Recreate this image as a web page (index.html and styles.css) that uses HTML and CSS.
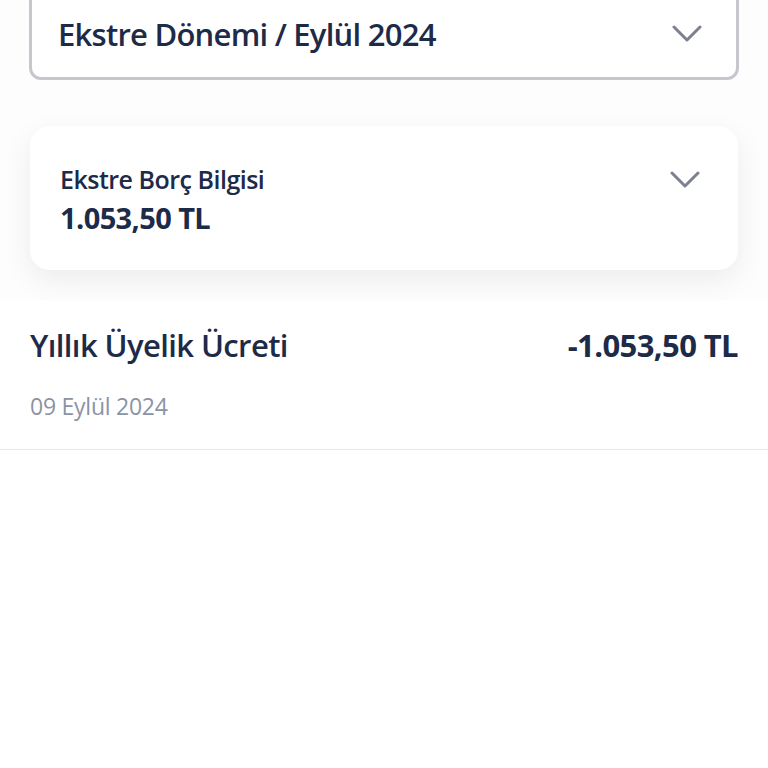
FILE: index.html
```html
<!DOCTYPE html>
<html lang="tr">
<head>
<meta charset="utf-8">
<link rel="stylesheet" href="styles.css">
</head>
<body>
<div class="top">
  <div class="select">
    <span class="select-text">Ekstre Dönemi / Eylül 2024</span>
    <svg class="chev" width="30" height="18" viewBox="0 0 30 18"><path d="M2 2 L15 15 L28 2" fill="none" stroke="#7b8190" stroke-width="3" stroke-linecap="round" stroke-linejoin="round"/></svg>
  </div>
  <div class="card">
    <div class="card-info">
      <div class="card-label">Ekstre Borç Bilgisi</div>
      <div class="card-amount">1.053,50 TL</div>
    </div>
    <svg class="chev" width="30" height="18" viewBox="0 0 30 18"><path d="M2 2 L15 15 L28 2" fill="none" stroke="#7b8190" stroke-width="3" stroke-linecap="round" stroke-linejoin="round"/></svg>
  </div>
</div>
<div class="tx">
  <div class="tx-row">
    <span class="tx-title">Yıllık Üyelik Ücreti</span>
    <span class="tx-amount">-1.053,50 TL</span>
  </div>
  <div class="tx-date">09 Eylül 2024</div>
</div>
</body>
</html>
```
FILE: styles.css
```css
* { box-sizing: border-box; }
html, body { margin: 0; padding: 0; background: #fff; }
body {
  font-family: "Open Sans", "Noto Sans", sans-serif;
  color: #1d2a48;
  width: 768px;
  overflow: hidden;
}
.top {
  background: #fdfdfd;
  padding: 0 29px 30px 29px;
}
.select {
  margin-top: -20px;
  height: 100px;
  border: 3px solid #c6c7cd;
  border-radius: 12px;
  background: #fff;
  display: flex;
  align-items: center;
  justify-content: space-between;
  padding: 8px 34px 0 26px;
}
.select-text {
  font-size: 31px;
  font-weight: 600;
  letter-spacing: -0.75px;
}
.chev { display: block; }
.card {
  margin: 46px 1px 0 1px;
  height: 144px;
  background: #fff;
  border-radius: 20px;
  box-shadow: 0 10px 30px rgba(0,0,0,0.07);
  display: flex;
  justify-content: space-between;
  align-items: flex-start;
  padding: 36px 38px 0 30px;
}
.card-label { font-size: 25px; font-weight: 600; line-height: 34px; letter-spacing: -0.5px; }
.card-amount { font-size: 29px; font-weight: 700; line-height: 40px; margin-top: 2px; letter-spacing: -0.6px; }
.card .chev { margin-top: 9px; }
.tx {
  padding: 24px 30px 0 30px;
  border-bottom: 1px solid #e6e7ea;
  height: 150px;
}
.tx-row { display: flex; justify-content: space-between; align-items: baseline; }
.tx-title { font-size: 31px; font-weight: 600; letter-spacing: -0.6px; }
.tx-amount { font-size: 31px; font-weight: 700; letter-spacing: -0.6px; }
.tx-date { margin-top: 24px; font-size: 23px; font-weight: 500; color: #8b93a5; letter-spacing: -0.25px; }
```
